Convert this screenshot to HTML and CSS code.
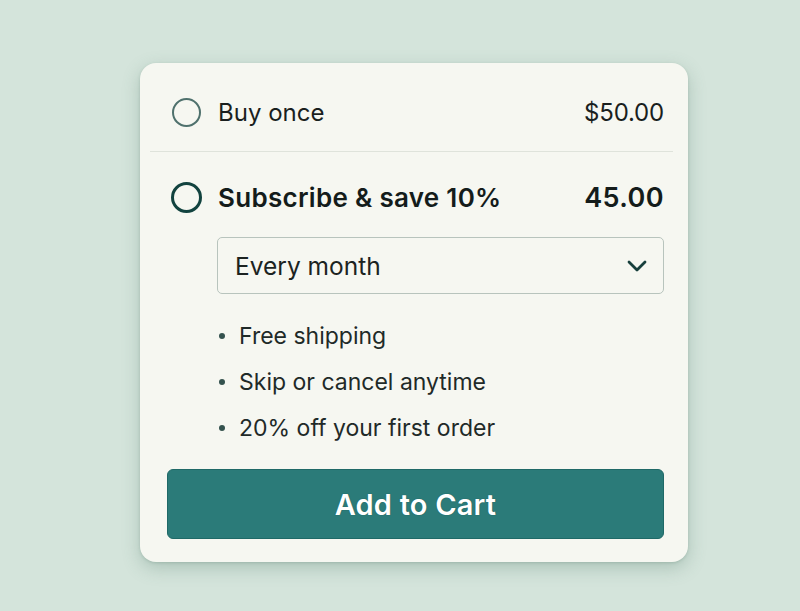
FILE: index.html
```html
<!DOCTYPE html>
<html lang="en">
<head>
<meta charset="utf-8">
<title>Purchase options</title>
<link rel="stylesheet" href="styles.css">
</head>
<body>
<div class="card">
  <div class="option">
    <span class="radio radio-light"></span>
    <span class="label">Buy once</span>
    <span class="price">$50.00</span>
  </div>
  <div class="divider"></div>
  <div class="option option-sub">
    <span class="radio radio-dark"></span>
    <span class="label label-strong">Subscribe &amp; save 10%</span>
    <span class="price price-strong">45.00</span>
  </div>
  <div class="select">
    <span class="select-text">Every month</span>
    <svg class="chevron" width="20" height="12" viewBox="0 0 20 12"><path d="M2 2 L10 10 L18 2" fill="none" stroke="#173f3c" stroke-width="2.8" stroke-linecap="round" stroke-linejoin="round"/></svg>
  </div>
  <ul class="perks">
    <li>Free shipping</li>
    <li>Skip or cancel anytime</li>
    <li>20% off your first order</li>
  </ul>
  <button class="cart">Add to Cart</button>
</div>
</body>
</html>
```
FILE: styles.css
```css
html, body {
  margin: 0;
  padding: 0;
}
body {
  width: 800px;
  height: 611px;
  background: #d4e4db;
  font-family: "Inter", "Liberation Sans", sans-serif;
  color: #1a1f1e;
  overflow: hidden;
}
.card {
  box-sizing: border-box;
  margin: 63px 0 0 140px;
  width: 548px;
  height: 499px;
  background: #f6f7f1;
  border-radius: 16px;
  box-shadow: 0 6px 18px rgba(70, 110, 95, 0.28), 0 1px 3px rgba(70, 110, 95, 0.2);
  padding: 19px 24px 23px 27px;
  display: flex;
  flex-direction: column;
}
.option {
  height: 60px;
  display: flex;
  align-items: center;
  padding-left: 5px;
}
.option-sub {
  margin-top: 15px;
  padding-left: 4px;
}
.radio {
  box-sizing: border-box;
  width: 29px;
  height: 29px;
  border-radius: 50%;
  flex: none;
  margin-right: 17px;
}
.radio-light {
  border: 2px solid #4f716d;
}
.radio-dark {
  width: 31px;
  height: 31px;
  border: 3px solid #12433f;
  margin-right: 16px;
}
.label {
  font-size: 24px;
  letter-spacing: 0;
  flex: 1;
}
.label-strong {
  font-size: 26px;
  font-weight: 600;
  letter-spacing: 0.3px;
  color: #141c1b;
}
.price {
  font-size: 24px;
  letter-spacing: -0.2px;
}
.price-strong {
  font-size: 27px;
  font-weight: 600;
  letter-spacing: 0.4px;
  color: #141c1b;
}
.divider {
  margin: 9px -9px 0 -17px;
  height: 1px;
  background: #dfe3db;
}
.select {
  box-sizing: border-box;
  margin: 10px 0 0 50px;
  height: 57px;
  border: 1.5px solid #b8c4bd;
  border-radius: 5px;
  display: flex;
  align-items: center;
  padding: 0 16px 0 17px;
}
.select-text {
  flex: 1;
  font-size: 24.5px;
  color: #1c2321;
}
.chevron {
  display: block;
}
.perks {
  list-style: none;
  margin: 19px 0 0 50px;
  padding: 0;
}
.perks li {
  height: 46px;
  line-height: 46px;
  font-size: 23px;
  color: #1f2a28;
  display: flex;
  align-items: center;
}
.perks li::before {
  content: "";
  width: 6px;
  height: 6px;
  border-radius: 50%;
  background: #34524e;
  margin: 0 14px 0 2px;
  flex: none;
}
.cart {
  margin-top: 18px;
  height: 70px;
  width: 100%;
  border: 1px solid #1f6967;
  border-radius: 6px;
  background: #2b7b79;
  color: #ffffff;
  font-family: "Inter", "Liberation Sans", sans-serif;
  font-size: 29px;
  font-weight: 600;
  letter-spacing: 0.2px;
  text-shadow: 0 0 1px rgba(10, 50, 48, 0.6);
  cursor: pointer;
}
```
